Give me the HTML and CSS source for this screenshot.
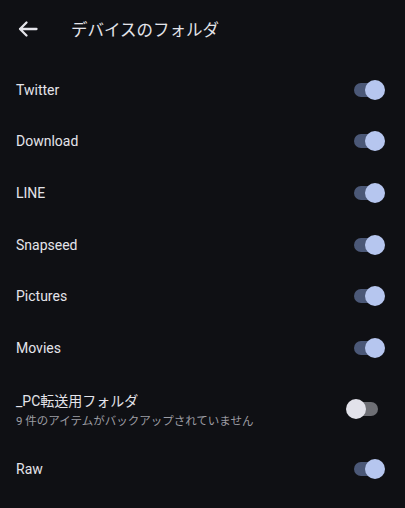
FILE: index.html
```html
<!DOCTYPE html>
<html lang="ja">
<head>
    <meta charset="UTF-8">
    <meta name="viewport" content="width=device-width, initial-scale=1.0">
    <title>デバイスのフォルダ</title>
    <link rel="stylesheet" href="styles.css">
</head>
<body>
    <header class="topbar">
        <svg class="back" width="24" height="24" viewBox="0 0 24 24">
            <path d="M4 12H20.5M10.5 5.5L4 12L10.5 18.5" fill="none" stroke="#e4e4ea" stroke-width="2.3" stroke-linecap="round" stroke-linejoin="round"/>
        </svg>
        <h1>デバイスのフォルダ</h1>
    </header>
    <ul class="folders">
        <li class="row"><span class="name">Twitter</span><span class="toggle on"></span></li>
        <li class="row"><span class="name">Download</span><span class="toggle on"></span></li>
        <li class="row"><span class="name">LINE</span><span class="toggle on"></span></li>
        <li class="row"><span class="name">Snapseed</span><span class="toggle on"></span></li>
        <li class="row"><span class="name">Pictures</span><span class="toggle on"></span></li>
        <li class="row"><span class="name">Movies</span><span class="toggle on"></span></li>
        <li class="row tall">
            <div>
                <span class="name">_PC転送用フォルダ</span>
                <span class="sub">9 件のアイテムがバックアップされていません</span>
            </div>
            <span class="toggle"></span>
        </li>
        <li class="row"><span class="name">Raw</span><span class="toggle on"></span></li>
    </ul>
</body>
</html>
```

FILE: styles.css
```css
body {
    margin: 0;
    background-color: #0f1014;
    color: #e4e4ea;
    font-family: Roboto, "Noto Sans CJK JP", sans-serif;
}
.topbar {
    height: 58px;
    display: flex;
    align-items: center;
    padding-left: 16px;
}
.back {
    display: block;
}
.topbar h1 {
    margin: 0 0 0 31px;
    font-size: 16.5px;
    font-weight: 400;
}
.folders {
    list-style: none;
    margin: 6px 0 0;
    padding: 0;
}
.row {
    height: 51.6px;
    display: flex;
    align-items: center;
    justify-content: space-between;
    padding: 0 27px 0 16px;
}
.row.tall {
    height: 70px;
}
.name {
    display: block;
    font-size: 14px;
}
.sub {
    display: block;
    font-size: 11.5px;
    color: #9c9ca3;
    margin-top: 2px;
}
.toggle {
    position: relative;
    width: 24px;
    height: 14px;
    border-radius: 7px;
    background-color: #6e6f75;
}
.toggle::after {
    content: "";
    position: absolute;
    top: -3px;
    left: -8px;
    width: 20px;
    height: 20px;
    border-radius: 50%;
    background-color: #e2e2ea;
}
.toggle.on {
    background-color: #4b5877;
}
.toggle.on::after {
    left: 11px;
    background-color: #b6c6ef;
}
```
